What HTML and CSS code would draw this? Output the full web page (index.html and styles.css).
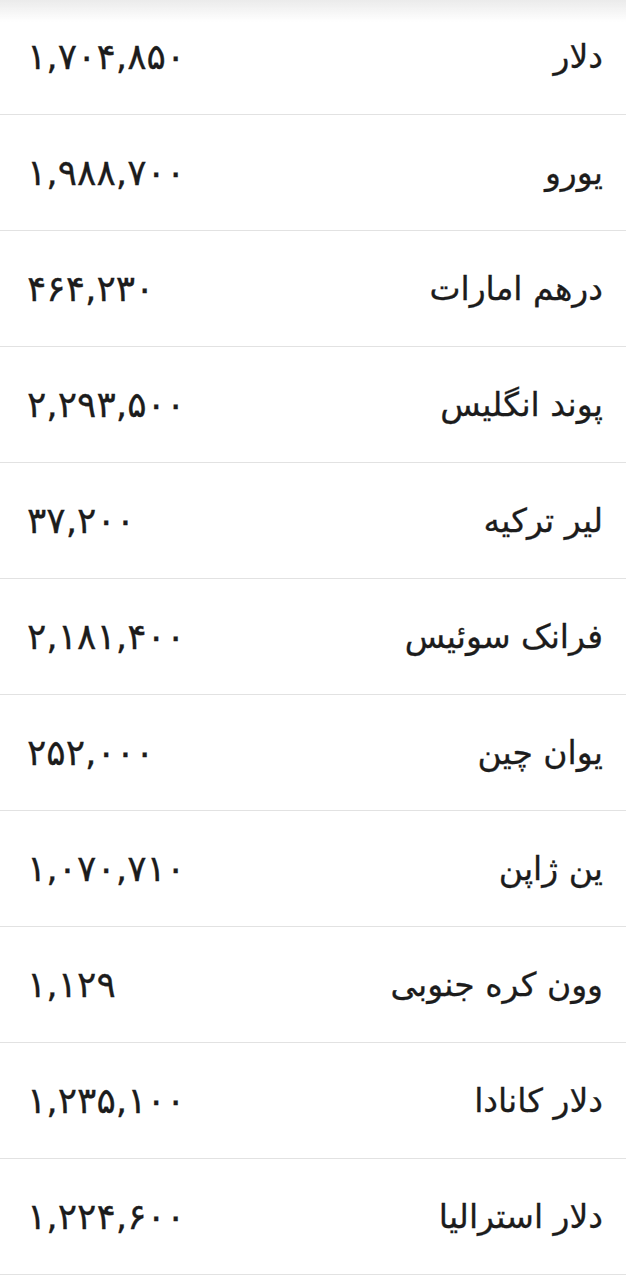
FILE: index.html
```html
<!DOCTYPE html>
<html lang="fa" dir="rtl">
  <head>
    <meta charset="UTF-8" />
    <meta name="viewport" content="width=device-width, initial-scale=1.0" />
    <title>نرخ ارز</title>
    <link rel="stylesheet" href="styles.css">
  </head>
  <body>
    <ul class="rates">
      <li class="rate"><span class="name">دلار</span><span class="price">۱,۷۰۴,۸۵۰</span></li>
      <li class="rate"><span class="name">یورو</span><span class="price">۱,۹۸۸,۷۰۰</span></li>
      <li class="rate"><span class="name">درهم امارات</span><span class="price">۴۶۴,۲۳۰</span></li>
      <li class="rate"><span class="name">پوند انگلیس</span><span class="price">۲,۲۹۳,۵۰۰</span></li>
      <li class="rate"><span class="name">لیر ترکیه</span><span class="price">۳۷,۲۰۰</span></li>
      <li class="rate"><span class="name">فرانک سوئیس</span><span class="price">۲,۱۸۱,۴۰۰</span></li>
      <li class="rate"><span class="name">یوان چین</span><span class="price">۲۵۲,۰۰۰</span></li>
      <li class="rate"><span class="name">ین ژاپن</span><span class="price">۱,۰۷۰,۷۱۰</span></li>
      <li class="rate"><span class="name">وون کره جنوبی</span><span class="price">۱,۱۲۹</span></li>
      <li class="rate"><span class="name">دلار کانادا</span><span class="price">۱,۲۳۵,۱۰۰</span></li>
      <li class="rate"><span class="name">دلار استرالیا</span><span class="price">۱,۲۲۴,۶۰۰</span></li>
    </ul>
    <div class="bar-shadow"></div>
  </body>
</html>
```

FILE: styles.css
```css
body {
  margin: 0;
  padding: 0;
  background-color: #fff;
  font-family: "DejaVu Sans", "Noto Sans", sans-serif;
  color: #1c1c1c;
}
.rates {
  list-style: none;
  margin: -1px 0 0;
  padding: 0;
}
.rate {
  height: 115px;
  border-bottom: 1px solid #e2e2e2;
  display: flex;
  justify-content: space-between;
  align-items: center;
  padding: 0 23px 0 27px;
}
.name {
  font-size: 33px;
  -webkit-text-stroke: 0.3px #1c1c1c;
}
.price {
  direction: ltr;
  font-size: 36px;
  letter-spacing: 1px;
  -webkit-text-stroke: 0.3px #1c1c1c;
}
.bar-shadow {
  position: fixed;
  top: 0;
  left: 0;
  right: 0;
  height: 22px;
  background: linear-gradient(#ebebeb, rgba(255, 255, 255, 0));
}
```
